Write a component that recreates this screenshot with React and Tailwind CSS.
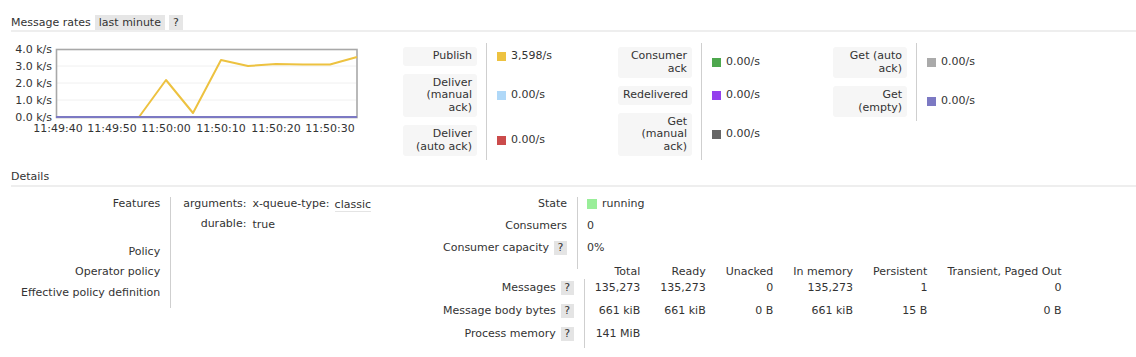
import React from 'react';

const font = { fontFamily: '"DejaVu Sans", Verdana, sans-serif' };

const Help = ({ className = '' }) => (
  <span className={`inline-block h-[14px] w-[13px] bg-[#e4e4e4] text-center leading-[14px] ${className}`}>?</span>
);

const rateColumns = [
  [
    { label: ['Publish'], color: 'bg-[#edc240]', value: '3,598/s' },
    { label: ['Deliver', '(manual', 'ack)'], color: 'bg-[#afd8f8]', value: '0.00/s' },
    { label: ['Deliver', '(auto ack)'], color: 'bg-[#cb4b4b]', value: '0.00/s' },
  ],
  [
    { label: ['Consumer', 'ack'], color: 'bg-[#4da74d]', value: '0.00/s' },
    { label: ['Redelivered'], color: 'bg-[#9440ed]', value: '0.00/s' },
    { label: ['Get', '(manual', 'ack)'], color: 'bg-[#666666]', value: '0.00/s' },
  ],
  [
    { label: ['Get (auto', 'ack)'], color: 'bg-[#aaaaaa]', value: '0.00/s' },
    { label: ['Get', '(empty)'], color: 'bg-[#7c79c3]', value: '0.00/s' },
  ],
];

const RateChart = () => {
  const yTicks = [
    { y: 6, t: '4.0 k/s' },
    { y: 23, t: '3.0 k/s' },
    { y: 40, t: '2.0 k/s' },
    { y: 57, t: '1.0 k/s' },
    { y: 74, t: '0.0 k/s' },
  ];
  const xTicks = [
    { x: 47, t: '11:49:40' },
    { x: 101, t: '11:49:50' },
    { x: 155, t: '11:50:00' },
    { x: 210, t: '11:50:10' },
    { x: 265, t: '11:50:20' },
    { x: 319, t: '11:50:30' },
  ];
  const publish = '45,74 128,74 155,37 182,70 210,17 237,23 265,21 292,21.5 319,21.5 346,14';

  return (
    <svg width="350" height="95" className="shrink-0" style={{ fontFamily: '"DejaVu Sans", sans-serif' }}>
      <rect x="45" y="6" width="301" height="68" fill="#fff" />
      {[23, 40, 57].map((y) => (
        <line key={y} x1="46" x2="345" y1={y} y2={y} stroke="#f0f0f0" strokeWidth="1" />
      ))}
      <rect x="45.5" y="6.5" width="300.5" height="68" fill="none" stroke="#a8a8a8" strokeWidth="1.6" />
      <polyline points={publish} fill="none" stroke="#edc240" strokeWidth="2" strokeLinejoin="round" />
      <line x1="45" x2="346" y1="74" y2="74" stroke="#7c79c3" strokeWidth="2" />
      {yTicks.map((d) => (
        <text key={d.t} x="41" y={d.y} fontSize="11" fill="#333" textAnchor="end" dominantBaseline="central">
          {d.t}
        </text>
      ))}
      {xTicks.map((d) => (
        <text key={d.t} x={d.x} y="85" fontSize="11" fill="#333" textAnchor="middle" dominantBaseline="central">
          {d.t}
        </text>
      ))}
    </svg>
  );
};

const RateColumn = ({ rows }) => (
  <div className="w-[215px] shrink-0">
    {rows.map((row, i) => (
      <div key={i} className="flex">
        <div className="py-[4px] pr-[9px]">
          <div className="w-[74px] rounded-[3px] bg-[#f6f6f6] px-[5px] py-[3px] text-right leading-[12.5px] whitespace-nowrap">
            {row.label.map((l) => (
              <div key={l}>{l}</div>
            ))}
          </div>
        </div>
        <div className="flex items-center gap-[5px] border-l border-[#cfcfcf] pl-[10px]">
          <span className={`inline-block h-[9px] w-[9px] ${row.color}`} />
          <span>{row.value}</span>
        </div>
      </div>
    ))}
  </div>
);

const SectionHeader = ({ children }) => (
  <div className="flex items-end border-b-2 border-[#eeeeee] leading-[15px]">{children}</div>
);

export default function App() {
  const msgCols = ['Total', 'Ready', 'Unacked', 'In memory', 'Persistent', 'Transient, Paged Out'];
  const msgRows = [
    { label: 'Messages', vals: ['135,273', '135,273', '0', '135,273', '1', '0'] },
    { label: 'Message body bytes', vals: ['661 kiB', '661 kiB', '0 B', '661 kiB', '15 B', '0 B'] },
    { label: 'Process memory', vals: ['141 MiB', '', '', '', '', ''] },
  ];

  return (
    <div className="min-h-[357px] w-[1136px] bg-white pl-[11px] pt-[15px] text-[11px] text-[#333]" style={font}>
      {/* Message rates */}
      <SectionHeader>
        <span>Message rates</span>
        <span className="ml-[4px] bg-[#e6e6e6] px-[4px]">last minute</span>
        <span className="ml-[4px] bg-[#e6e6e6] px-[4px]">?</span>
      </SectionHeader>

      <div className="mt-[11px] flex items-start">
        <RateChart />
        <div className="ml-[42px] flex">
          {rateColumns.map((rows, i) => (
            <RateColumn key={i} rows={rows} />
          ))}
        </div>
      </div>

      {/* Details */}
      <div className="mt-[10px]">
        <div className="border-b-2 border-[#eeeeee] pb-[1px] leading-[14px]">Details</div>
      </div>

      <div className="mt-[10px] flex items-start leading-[14px]">
        {/* left facts */}
        <div className="w-[432px] shrink-0">
          <table className="border-collapse">
            <tbody>
              <tr>
                <th className="pb-[14px] pl-[10px] pr-[10px] text-right align-top font-normal">Features</th>
                <td className="border-l border-[#cfcfcf] pb-[14px] pl-[12px] align-top">
                  <table className="border-collapse">
                    <tbody>
                      <tr>
                        <th className="pr-[6px] text-right align-top font-normal">arguments:</th>
                        <td className="align-top">
                          x-queue-type:
                          <span className="relative top-[1px] ml-[5px] border-b border-[#e4e4e4]">classic</span>
                        </td>
                      </tr>
                      <tr>
                        <th className="pt-[6px] pr-[6px] text-right align-top font-normal">durable:</th>
                        <td className="pt-[6px] align-top">
                          <span className="relative top-[1px]">true</span>
                        </td>
                      </tr>
                    </tbody>
                  </table>
                </td>
              </tr>
              <tr>
                <th className="pb-[6px] pl-[10px] pr-[10px] text-right align-top font-normal">Policy</th>
                <td className="border-l border-[#cfcfcf] pb-[6px] pl-[12px]"></td>
              </tr>
              <tr>
                <th className="pb-[7px] pl-[10px] pr-[10px] text-right align-top font-normal">Operator policy</th>
                <td className="border-l border-[#cfcfcf] pb-[7px] pl-[12px]"></td>
              </tr>
              <tr>
                <th className="pb-[8px] pl-[10px] pr-[10px] text-right align-top font-normal">
                  Effective policy definition
                </th>
                <td className="border-l border-[#cfcfcf] pb-[8px] pl-[12px]"></td>
              </tr>
            </tbody>
          </table>
        </div>

        {/* state + messages */}
        <div>
          <table className="border-collapse">
            <tbody>
              <tr>
                <th className="h-[22px] pr-[10px] text-right align-top font-normal">State</th>
                <td className="border-l border-[#cfcfcf] pl-[9px] align-top">
                  <span className="flex items-center gap-[5px]">
                    <span className="inline-block h-[10px] w-[10px] bg-[#99ee99]" />
                    running
                  </span>
                </td>
              </tr>
              <tr>
                <th className="h-[22px] pr-[10px] text-right align-top font-normal">Consumers</th>
                <td className="border-l border-[#cfcfcf] pl-[9px] align-top">0</td>
              </tr>
              <tr>
                <th className="h-[28px] pr-[10px] text-right align-top font-normal">
                  <span className="flex items-center justify-end gap-[5px]">
                    Consumer capacity
                    <Help />
                  </span>
                </th>
                <td className="border-l border-[#cfcfcf] pl-[9px] align-top">0%</td>
              </tr>
            </tbody>
          </table>

          <table className="-mt-[6px] border-collapse">
            <tbody>
              <tr>
                <th className="h-[16px]"></th>
                {msgCols.map((c, i) => (
                  <th
                    key={c}
                    className={`pt-[2px] text-right align-top font-normal whitespace-nowrap ${i === 0 ? 'pl-[10px]' : 'pl-[20px]'}`}
                  >
                    {c}
                  </th>
                ))}
              </tr>
              {msgRows.map((r) => (
                <tr key={r.label}>
                  <th className="h-[23px] pr-[10px] pt-[2px] text-right align-top font-normal whitespace-nowrap">
                    <span className="flex items-center justify-end gap-[5px]">
                      {r.label}
                      <Help />
                    </span>
                  </th>
                  {r.vals.map((v, i) => (
                    <td
                      key={i}
                      className={`pt-[2px] text-right align-top whitespace-nowrap ${
                        i === 0 ? 'border-l border-[#cfcfcf] pl-[10px]' : 'pl-[20px]'
                      }`}
                    >
                      {v}
                    </td>
                  ))}
                </tr>
              ))}
            </tbody>
          </table>
        </div>
      </div>
    </div>
  );
}
